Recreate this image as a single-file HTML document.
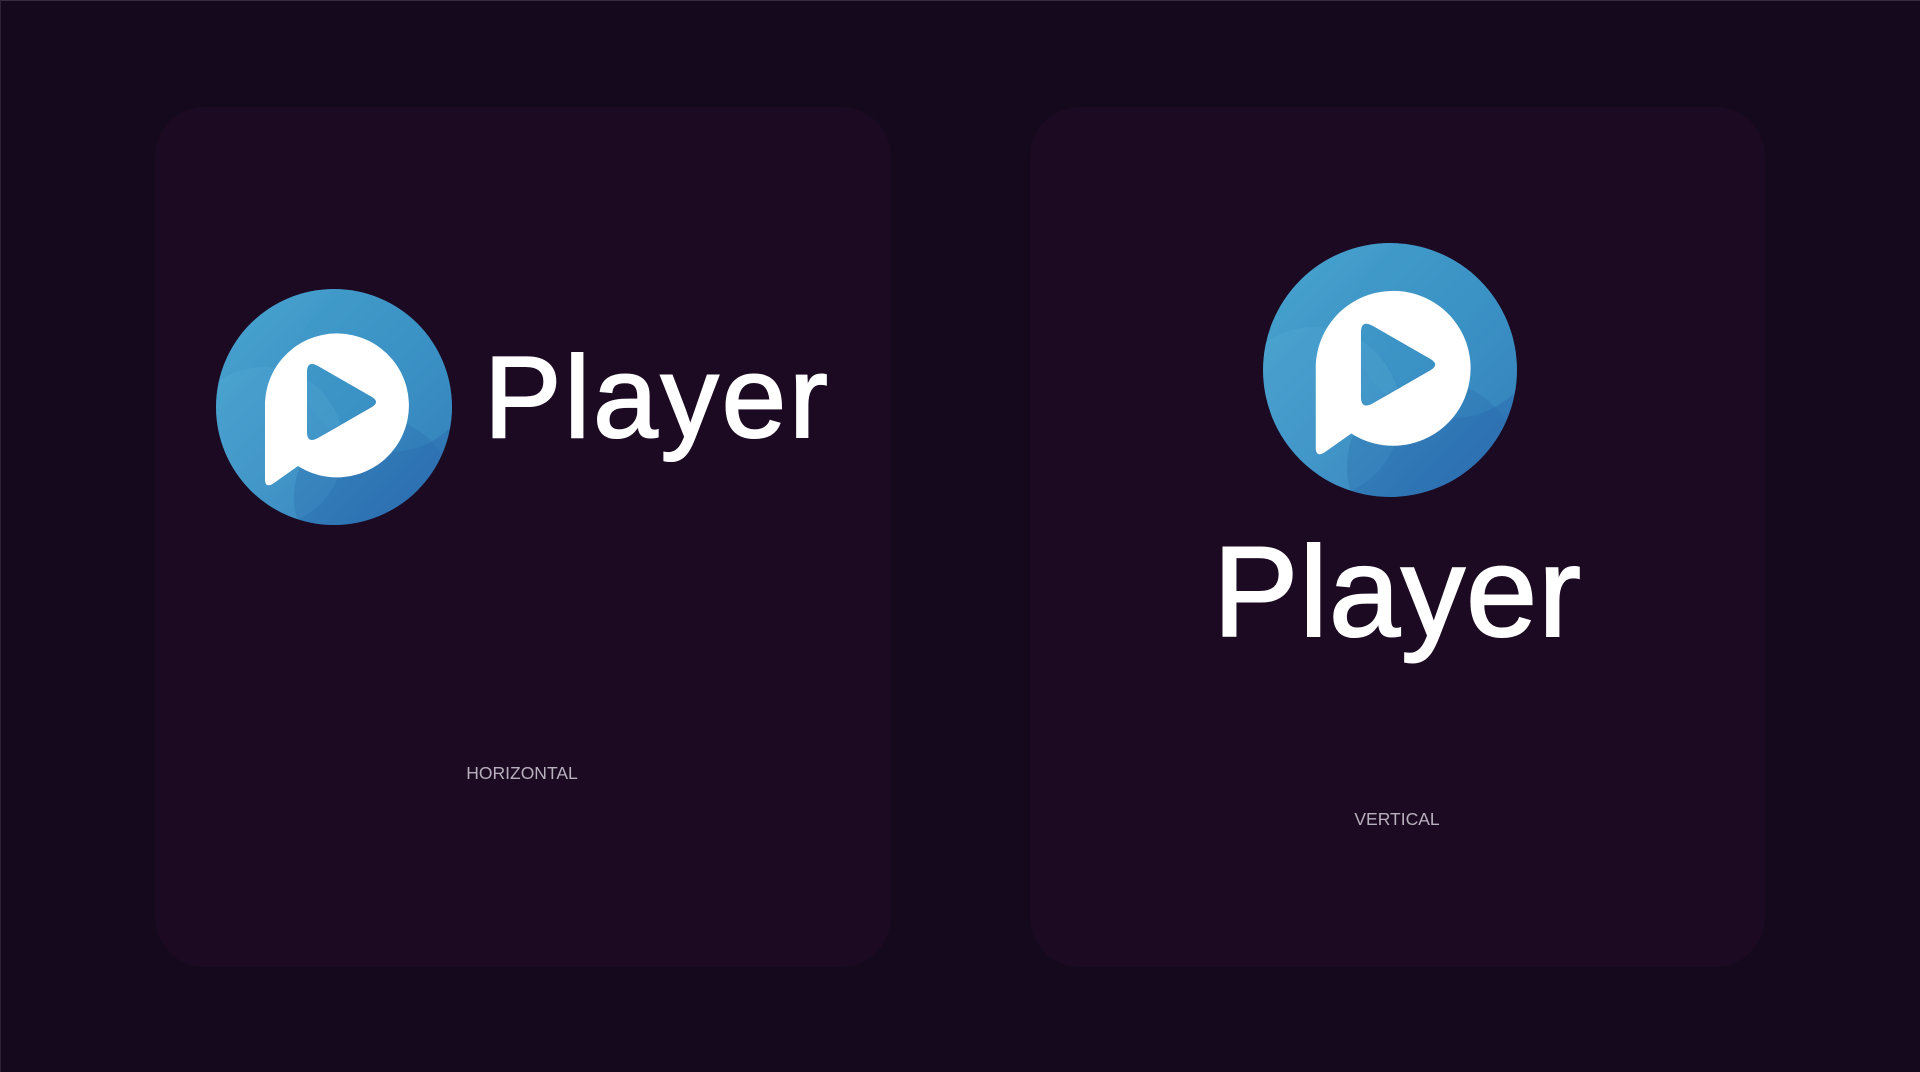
<!DOCTYPE html>
<html><head><meta charset="utf-8"><style>
html,body{margin:0;padding:0;background:#150a1d;}
svg{display:block}
</style></head><body>
<svg width="1920" height="1072" viewBox="0 0 1920 1072" xmlns="http://www.w3.org/2000/svg">
<defs>
<linearGradient id="g" x1="0" y1="0" x2="1" y2="1">
<stop offset="0" stop-color="#4aa6cf"/>
<stop offset="0.5" stop-color="#3a8fc4"/>
<stop offset="1" stop-color="#2a68ad"/>
</linearGradient>
<clipPath id="cc"><circle cx="0" cy="0" r="118"/></clipPath>
<g id="logo">
<circle cx="0" cy="0" r="118" fill="url(#g)"/>
<g clip-path="url(#cc)">
<circle cx="55" cy="-45" r="90" fill="#3d9ac7" opacity="0.45"/>
<circle cx="-70" cy="40" r="80" fill="#5aaed6" opacity="0.25"/>
<circle cx="40" cy="90" r="80" fill="#2b6cb0" opacity="0.35"/>
</g>
<path fill="#fff" fill-rule="evenodd" d="M -69,-5 A 72 72 0 1 1 -36,59 L -60,76 Q -69,82 -69,72 Z M -27,-35 Q -27,-47 -16,-41 L 38,-10 Q 46,-5 38,0 L -16,31 Q -27,37 -27,25 Z"/>
</g>
</defs>
<rect x="0" y="0" width="1920" height="1072" fill="#150a1d"/>
<rect x="0" y="0" width="1920" height="1" fill="#3a2c42"/>
<rect x="0" y="0" width="1" height="1072" fill="#2e2236"/>
<rect x="155" y="107" width="736" height="860" rx="50" fill="#1c0a22"/>
<rect x="1030" y="107" width="735" height="860" rx="50" fill="#1c0a22"/>
<use href="#logo" transform="translate(334,407)"/>
<text x="484" y="437" font-family="Liberation Sans, sans-serif" font-size="116" fill="#fff" stroke="#fff" stroke-width="2" letter-spacing="3">Player</text>
<text x="522" y="779" text-anchor="middle" font-family="Liberation Sans, sans-serif" font-size="17.5" fill="#b9b0be">HORIZONTAL</text>
<use href="#logo" transform="translate(1390,370) scale(1.076)"/>
<text x="1213" y="636" font-family="Liberation Sans, sans-serif" font-size="128" fill="#fff" stroke="#fff" stroke-width="2" letter-spacing="1">Player</text>
<text x="1397" y="825" text-anchor="middle" font-family="Liberation Sans, sans-serif" font-size="17.5" fill="#b9b0be">VERTICAL</text>
</svg>
</body></html>
